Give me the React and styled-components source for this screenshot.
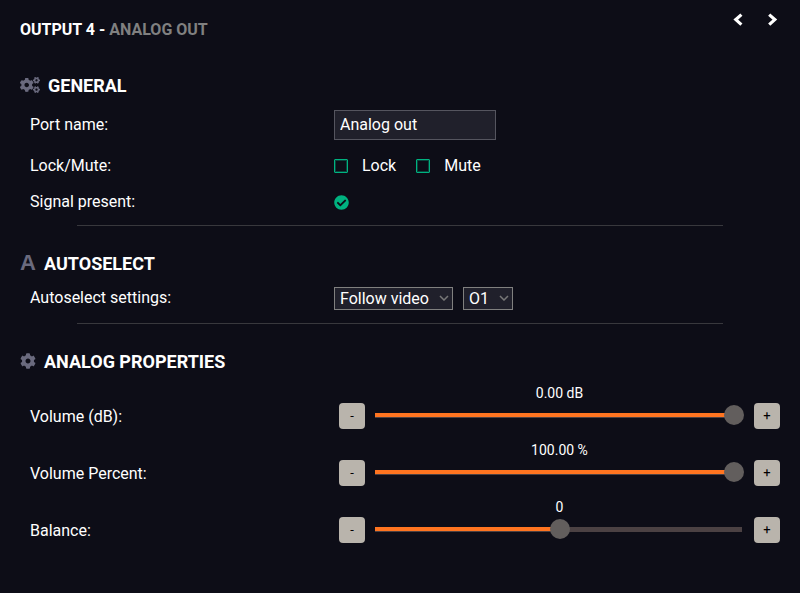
import React, { useState } from "react";
import styled, { createGlobalStyle } from "styled-components";
import { FaCogs, FaCog, FaCheckCircle } from "react-icons/fa";

const GlobalStyle = createGlobalStyle`
  * {
    box-sizing: border-box;
  }

  body {
    margin: 0;
    background: #0d0d17;
    color: #fff;
    font-family: Roboto, sans-serif;
    font-size: 16px;
  }

  input, select, button {
    font-family: inherit;
    color: inherit;
    margin: 0;
  }
`;

// Page frame
const Panel = styled.main`
  min-height: 100vh;
  padding: 0 20px;
  background: #0d0d17;
`;

const Header = styled.header`
  display: flex;
  justify-content: space-between;
  align-items: flex-start;
  height: 68px;
`;

const Title = styled.h1`
  margin: 20px 0 0;
  font-size: 16px;
  line-height: 20px;
  font-weight: 700;
  text-transform: uppercase;
`;

const PortType = styled.span`
  color: #808080;
`;

const Pager = styled.nav`
  display: flex;
  gap: 2px;
  margin-right: -8px;
  padding-top: 4px;
`;

const PagerButton = styled.button`
  display: flex;
  align-items: center;
  justify-content: center;
  width: 32px;
  height: 32px;
  padding: 0;
  border: 0;
  background: transparent;
  cursor: pointer;
`;

// Sections
const SectionTitle = styled.h2`
  display: flex;
  align-items: center;
  gap: 8px;
  height: 34px;
  margin: 0 0 ${(props) => props.$gap || 0}px;
  font-size: 18px;
  font-weight: 700;
  text-transform: uppercase;

  svg {
    color: #6a6a7e;
    font-size: ${(props) => props.$iconSize || 16}px;
  }
`;

const LetterIcon = styled.span`
  width: 16px;
  color: #6a6a7e;
  font-family: "Liberation Sans", sans-serif;
  font-size: 22px;
  line-height: 22px;
`;

const Divider = styled.hr`
  width: 85%;
  height: 1px;
  margin: 0 auto 20px;
  border: 0;
  background: #38383d;
`;

const Row = styled.div`
  display: grid;
  grid-template-columns: 40% 1fr;
  align-items: ${(props) => (props.$alignEnd ? "end" : "center")};
  min-height: ${(props) => props.$height}px;
  margin-bottom: ${(props) => props.$gap || 0}px;
`;

const Label = styled.label`
  padding-left: 10px;
  line-height: 24px;
`;

const Controls = styled.div`
  display: flex;
  align-items: center;
  gap: ${(props) => props.$gap || 10}px;
  padding-left: 10px;
`;

const TextInput = styled.input`
  width: 162px;
  height: 30px;
  padding: 0 5px 2px;
  border: 1px solid #55555f;
  background: #20202b;
  font-size: 16px;
`;

const CheckLabel = styled.label`
  display: flex;
  align-items: center;
  gap: 14px;
  line-height: 20px;
`;

const Checkbox = styled.input`
  appearance: none;
  width: 14px;
  height: 14px;
  border: 1px solid #00b280;
  border-radius: 1px;
  box-shadow: inset 0 0 0 1px rgba(0, 178, 128, 0.35);

  &:checked {
    background: #00b280;
  }
`;

const SignalIcon = styled(FaCheckCircle)`
  display: block;
  color: #00b280;
  font-size: 15px;
`;

const SelectBox = styled.span`
  display: grid;
  align-items: center;

  > * {
    grid-area: 1 / 1;
  }

  svg {
    justify-self: end;
    margin-right: 4px;
    pointer-events: none;
  }
`;

const Select = styled.select`
  appearance: none;
  height: 23px;
  padding: 0 23px 0 5px;
  border: 1px solid #80807f;
  border-radius: 0;
  background: #20202b;
  font-size: 16px;
`;

// Sliders
const SliderControls = styled.div`
  display: grid;
  grid-template-columns: 26px 1fr 26px;
  grid-template-rows: 20px 26px;
  column-gap: 10px;
  padding-left: 15px;
`;

const Value = styled.output`
  grid-column: 2;
  font-size: 14px;
  line-height: 20px;
  text-align: center;
`;

const StepButton = styled.button`
  grid-row: 2;
  width: 26px;
  height: 26px;
  padding: 0 0 2px;
  border: 0;
  border-radius: 4px;
  background: #b9b4ac;
  color: #000;
  font-size: 13px;
  cursor: pointer;
`;

const Range = styled.input`
  appearance: none;
  grid-row: 2;
  width: 100%;
  min-width: 0;
  height: 25px;
  background: transparent;

  &::-webkit-slider-runnable-track {
    height: 5px;
    background:
      linear-gradient(#ff7420, #ff7420) 0 0 / var(--filled) 4px no-repeat,
      linear-gradient(#4b4143, #4b4143) 0 0 / calc(100% - 2px) 5px no-repeat;
  }

  &::-webkit-slider-thumb {
    appearance: none;
    width: 20px;
    height: 20px;
    margin-top: -8px;
    border-radius: 50%;
    background: #625e5d;
  }
`;

const Chevron = ({ d }) => (
  <svg width="14" height="16" viewBox="0 0 14 16" aria-hidden="true">
    <path d={d} fill="none" stroke="#fff" strokeWidth="3.2" />
  </svg>
);

const SelectField = ({ id, label, options }) => (
  <SelectBox>
    <Select id={id} aria-label={label}>
      {options.map((option) => (
        <option key={option}>{option}</option>
      ))}
    </Select>
    <svg width="10" height="6" viewBox="0 0 10 6" aria-hidden="true">
      <path d="M1 1l4 4 4-4" fill="none" stroke="#777" strokeWidth="1.5" />
    </svg>
  </SelectBox>
);

const CheckField = ({ children }) => (
  <CheckLabel>
    <Checkbox type="checkbox" />
    {children}
  </CheckLabel>
);

const SliderRow = ({ id, label, min, max, initial, format }) => {
  const [value, setValue] = useState(initial);
  const filled = ((value - min) / (max - min)) * 98;
  const step = (delta) => setValue(Math.min(max, Math.max(min, value + delta)));

  return (
    <Row $alignEnd $height={46} $gap={11}>
      <Label htmlFor={id}>{label}:</Label>
      <SliderControls>
        <Value htmlFor={id}>{format(value)}</Value>
        <StepButton type="button" aria-label={`Decrease ${label}`} onClick={() => step(-1)}>
          -
        </StepButton>
        <Range
          id={id}
          type="range"
          min={min}
          max={max}
          value={value}
          style={{ "--filled": `${filled}%` }}
          onChange={(e) => setValue(Number(e.target.value))}
        />
        <StepButton type="button" aria-label={`Increase ${label}`} onClick={() => step(1)}>
          +
        </StepButton>
      </SliderControls>
    </Row>
  );
};

const App = () => {
  const [portName, setPortName] = useState("Analog out");

  return (
    <>
      <GlobalStyle />
      <Panel>
        <Header>
          <Title>
            Output 4 - <PortType>Analog out</PortType>
          </Title>
          <Pager>
            <PagerButton type="button" aria-label="Previous port">
              <Chevron d="M10.4 2.6L4.8 7.6l5.6 5" />
            </PagerButton>
            <PagerButton type="button" aria-label="Next port">
              <Chevron d="M4.2 2.6l5.6 5-5.6 5" />
            </PagerButton>
          </Pager>
        </Header>

        <section>
          <SectionTitle $iconSize={20}>
            <FaCogs />
            General
          </SectionTitle>
          <Row $height={46}>
            <Label htmlFor="port-name">Port name:</Label>
            <Controls>
              <TextInput
                id="port-name"
                value={portName}
                onChange={(e) => setPortName(e.target.value)}
              />
            </Controls>
          </Row>
          <Row $height={36}>
            <Label as="span">Lock/Mute:</Label>
            <Controls $gap={20}>
              <CheckField>Lock</CheckField>
              <CheckField>Mute</CheckField>
            </Controls>
          </Row>
          <Row $height={36} $gap={5}>
            <Label as="span">Signal present:</Label>
            <Controls>
              <SignalIcon role="img" aria-label="Yes" />
            </Controls>
          </Row>
          <Divider />
        </section>

        <section>
          <SectionTitle>
            <LetterIcon aria-hidden="true">A</LetterIcon>
            Autoselect
          </SectionTitle>
          <Row $height={36} $gap={7}>
            <Label htmlFor="autoselect-mode">Autoselect settings:</Label>
            <Controls>
              <SelectField
                id="autoselect-mode"
                label="Autoselect mode"
                options={["Follow video", "Last detect"]}
              />
              <SelectField id="autoselect-port" label="Autoselect port" options={["O1", "O2"]} />
            </Controls>
          </Row>
          <Divider />
        </section>

        <section>
          <SectionTitle $gap={5}>
            <FaCog />
            Analog properties
          </SectionTitle>
          <SliderRow
            id="volume-db"
            label="Volume (dB)"
            min={-57}
            max={0}
            initial={0}
            format={(v) => `${v.toFixed(2)} dB`}
          />
          <SliderRow
            id="volume-percent"
            label="Volume Percent"
            min={0}
            max={100}
            initial={100}
            format={(v) => `${v.toFixed(2)} %`}
          />
          <SliderRow
            id="balance"
            label="Balance"
            min={-100}
            max={100}
            initial={0}
            format={(v) => v}
          />
        </section>
      </Panel>
    </>
  );
};

export default App;
